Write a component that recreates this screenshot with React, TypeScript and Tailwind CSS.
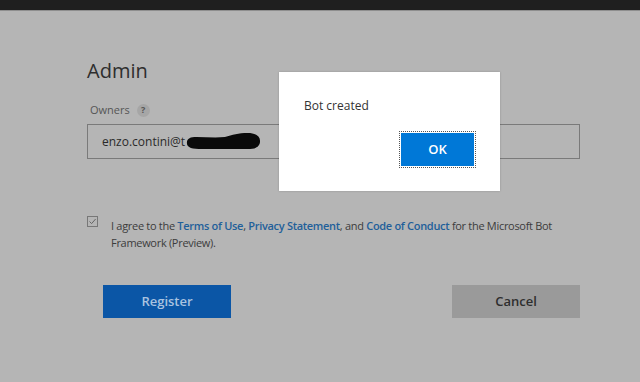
import React from 'react';

function Scribble() {
  return (
    <svg className="absolute left-[97px] top-[7px]" width="76" height="19" viewBox="0 0 80 19" preserveAspectRatio="none">
      <path
        d="M2 11 C2 6 6 5 12 5 C22 5 32 6 42 5 C50 3 56 1 66 1 C74 1 79 4 79 9 C79 15 74 17 66 17 C50 17 34 17 18 17 C8 17 2 16 2 11 Z"
        fill="#0a0a0a"
      />
    </svg>
  );
}

export default function App() {
  return (
    <div className="relative w-[640px] h-[382px] overflow-hidden bg-[#b5b5b5] font-['Open_Sans','Noto_Sans',sans-serif] text-[#3a3a3a]">
      {/* top bar */}
      <div className="h-[11px] bg-[#1f1f1f] border-b border-[#8e8e8e]" />

      <div className="pl-[87px] pr-[60px] pt-[47px]">
        <h1 className="text-[20px] leading-[26px] text-[#2e2e2e]">Admin</h1>

        <div className="mt-[18px] flex items-center gap-[7px] pl-[3px]">
          <span className="text-[11px] leading-[16px] text-[#555]">Owners</span>
          <span className="flex items-center justify-center w-[13px] h-[13px] rounded-full bg-[#a6a6a6] text-[9px] font-bold text-[#555]">?</span>
        </div>

        <div className="relative mt-[6px] h-[35px] border border-[#7a7a7a] flex items-center pl-[14px]">
          <span className="text-[12px] text-[#2a2a2a]">enzo.contini@t</span>
          <span className="ml-[56px] text-[11px] text-[#8a8a8a]">ft.it</span>
          <Scribble />
        </div>

        <div className="mt-[58px] flex items-start">
          <div className="mt-[-1px] w-[11px] h-[11px] border border-[#777] flex items-center justify-center">
            <svg width="9" height="9" viewBox="0 0 9 9">
              <path d="M1.5 4.5 L3.6 6.6 L7.6 2" stroke="#666" strokeWidth="1" fill="none" />
            </svg>
          </div>
          <p className="ml-[13px] text-[11px] leading-[17px] tracking-[-0.3px] text-[#3c3c3c]">
            I agree to the <span className="font-semibold text-[#1f5f9a]">Terms of Use</span>,{' '}
            <span className="font-semibold text-[#1f5f9a]">Privacy Statement</span>, and{' '}
            <span className="font-semibold text-[#1f5f9a]">Code of Conduct</span> for the Microsoft Bot
            Framework (Preview).
          </p>
        </div>

        <div className="mt-[34px] flex justify-between pl-[16px]">
          <button className="w-[128px] h-[33px] bg-[#0b56a6] text-[#a9c3e0] text-[13px] font-semibold">
            Register
          </button>
          <button className="w-[128px] h-[33px] bg-[#9a9a9a] text-[#2e2e2e] text-[13px] font-semibold">
            Cancel
          </button>
        </div>
      </div>

      {/* dialog */}
      <div className="absolute left-[279px] top-[72px] w-[221px] h-[119px] bg-white shadow-[0_0_2px_rgba(0,0,0,0.2)]">
        <p className="pl-[25px] pt-[26px] text-[12px] leading-[16px] text-[#333]">Bot created</p>
        <div className="absolute left-[120px] top-[59px] p-[1px] border border-dotted border-[#555]">
          <button className="w-[73px] h-[33px] bg-[#0078d7] text-white text-[13px] font-semibold">OK</button>
        </div>
      </div>
    </div>
  );
}
